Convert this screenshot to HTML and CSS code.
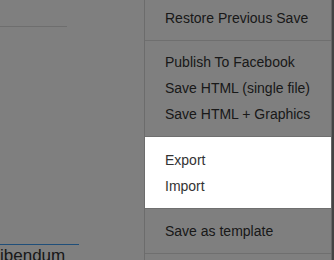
FILE: index.html
```html
<!DOCTYPE html>
<html lang="en">
<head>
    <meta charset="UTF-8">
    <meta name="viewport" content="width=device-width, initial-scale=1.0">
    <title>File Menu</title>
    <link rel="stylesheet" href="styles.css">
</head>

<body>
    <div class="app">
        <div class="content">
            <div class="title-rule"></div>
            <div class="editor"></div>
            <p class="caption">ibendum</p>
        </div>

        <div class="menu">
            <div class="menu-list">
                <div class="group first">
                    <div class="item">Restore Previous Save</div>
                </div>
                <div class="sep"></div>
                <div class="group">
                    <div class="item">Publish To Facebook</div>
                    <div class="item">Save HTML (single file)</div>
                    <div class="item">Save HTML + Graphics</div>
                </div>
                <div class="sep"></div>
                <!-- highlighted group sits above the overlay -->
                <div class="group spot">
                    <div class="item">Export</div>
                    <div class="item">Import</div>
                </div>
                <div class="sep"></div>
                <div class="group last">
                    <div class="item">Save as template</div>
                </div>
                <div class="sep"></div>
            </div>
            <div class="scrollbar"></div>
        </div>
    </div>

    <div class="overlay"></div>
</body>

</html>
```

FILE: styles.css
```css
body {
    margin: 0;
    font-family: "Liberation Sans", Arial, sans-serif;
    background-color: #fff;
    color: #333;
    overflow: hidden;
}

.app {
    display: flex;
    height: 260px;
    overflow: hidden;
}

.content {
    width: 144px;
    flex-shrink: 0;
}

.title-rule {
    margin-top: 26px;
    width: 67px;
    height: 1px;
    background-color: #dcdcdc;
}

.editor {
    width: 79px;
    height: 217px;
    border-bottom: 1px solid #3e9cf2;
}

.caption {
    margin: 1px 0 0;
    font-size: 17px;
    line-height: 20px;
}

.menu {
    display: flex;
    width: 190px;
    flex-shrink: 0;
}

.menu-list {
    width: 186px;
    background-color: #fff;
    border-left: 1px solid #d8d8d8;
    border-right: 1px solid #cfcfcf;
}

.group {
    padding: 8px 0 9px;
}

.group.first {
    padding-top: 5px;
}

.group.spot {
    position: relative;
    z-index: 2;
    background-color: #fff;
    padding-top: 10px;
}

.group.last {
    padding: 9px 0;
}

.item {
    padding-left: 20px;
    font-size: 14px;
    line-height: 26px;
    white-space: nowrap;
}

.sep {
    height: 1px;
    background-color: #dedede;
}

.scrollbar {
    width: 2px;
    background-color: #888;
}

.overlay {
    position: fixed;
    top: 0;
    left: 0;
    right: 0;
    bottom: 0;
    z-index: 1;
    background-color: rgba(0, 0, 0, 0.5);
}
```
